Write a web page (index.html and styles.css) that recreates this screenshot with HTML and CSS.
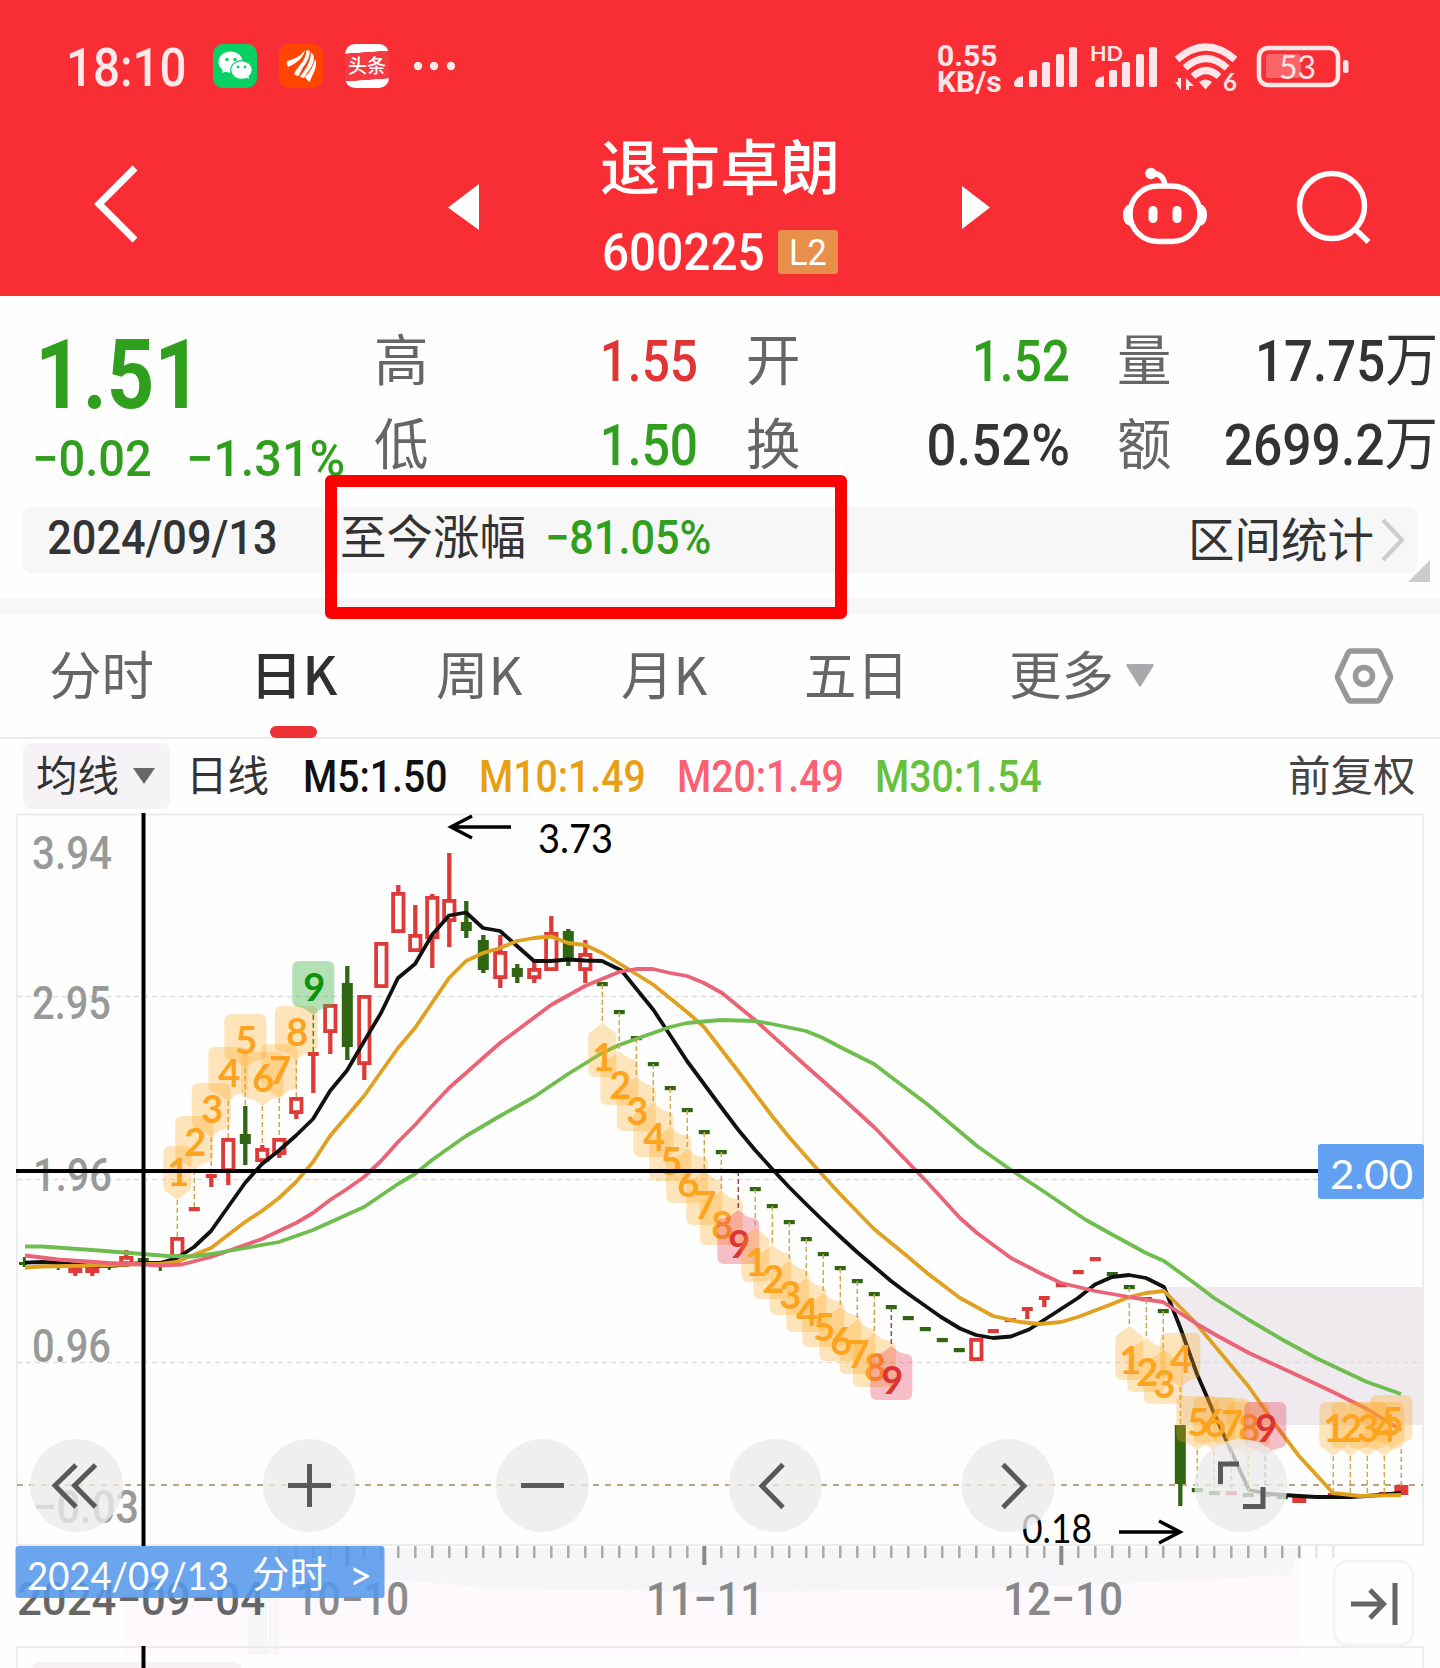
FILE: index.html
```html
<!DOCTYPE html>
<html lang="zh-CN">
<head>
<meta charset="utf-8">
<title>退市卓朗 600225</title>
<link rel="stylesheet" href="styles.css">
</head>
<body>
<header class="top">
  <div class="status">
    <span class="clock"><b class="din">18:10</b></span>
    <svg class="app" viewBox="0 0 44 44"><rect width="44" height="44" rx="10" fill="#07d163"/><ellipse cx="17.500" cy="18" rx="12" ry="10.500" fill="#fff"/><path d="M10 25l-1 4 5-2z" fill="#fff"/><ellipse cx="28.500" cy="26" rx="10.800" ry="9.400" fill="#fff" stroke="#07d163" stroke-width="1.200"/><path d="M32 33l4 2-1-4z" fill="#fff"/><g fill="#07d163"><circle cx="14" cy="15.500" r="1.700"/><circle cx="22" cy="15.500" r="1.700"/><circle cx="25" cy="23" r="1.400"/><circle cx="32" cy="23" r="1.400"/></g></svg>
    <svg class="app" viewBox="0 0 44 44"><rect width="44" height="44" rx="10" fill="#ff4500"/><g fill="#fff"><path d="M8 17C16 15 22 12 26 6C25 13 18 19 9 23Q7 20 8 17Z"/><path d="M15 30C20 20 27 17 27.500 6L31 7C30 19 23 22 20 32Q17 32 15 30Z"/><path d="M21 33C27 24 31 20 32 8L35 12C35 23 29 26 25 34Z"/><path d="M26 33C31 28 34 23 36 15Q38.500 20 35 28L30.500 38Q28 36 26 33Z"/></g></svg>
    <span class="app toutiao"><i>头条</i></span>
    <svg class="dots" viewBox="0 0 42 10"><circle cx="5" cy="5" r="4.200"/><circle cx="21" cy="5" r="4.200"/><circle cx="38" cy="5" r="4.200"/></svg>
    <span class="speed">0.55<br>KB/s</span>
    <svg class="signals" viewBox="1010 40 345 56">
      <g fill="#ffe6e8">
        <path d="M1014 84q0-6 9-8v11h-6q-3 0-3-3z"/><rect x="1029" y="70" width="8" height="17" rx="2"/><rect x="1042" y="62" width="8" height="25" rx="2"/><rect x="1056" y="54" width="8" height="33" rx="2"/><rect x="1069" y="47" width="8" height="40" rx="2"/>
        <path d="M1095 84q0-6 9-8v11h-6q-3 0-3-3z"/><rect x="1109" y="70" width="8" height="17" rx="2"/><rect x="1122" y="62" width="8" height="25" rx="2"/><rect x="1136" y="54" width="8" height="33" rx="2"/><rect x="1149" y="47" width="8" height="40" rx="2"/>
        <path d="M1199 82q6.500-5 13 0l-6.500 7.500zM1175 82h3v-4h3v12zM1186 78l8 8h-5v4h-3z"/>
        <rect x="1343" y="60" width="5.500" height="13" rx="2.500"/>
        <rect x="1266" y="54" width="35" height="24" rx="3" opacity=".3"/>
      </g>
      <g fill="none" stroke="#ffe6e8" stroke-width="7"><path d="M1177 59.500q29-25 58 0"/><path d="M1185 68q21-19 42 0"/><path d="M1193 76.500q13-12 26 0"/></g>
      <rect x="1259" y="48" width="79" height="37" rx="9" fill="none" stroke="#ffe6e8" stroke-width="4.500"/>
      <text class="st b" x="1090" y="61" font-size="21" textLength="33" lengthAdjust="spacingAndGlyphs">HD</text>
      <text class="st b" x="1223" y="91" font-size="24">6</text>
      <text class="st" x="1279" y="78.500" font-size="33" textLength="37" lengthAdjust="spacingAndGlyphs">53</text>
    </svg>
  </div>
  <nav class="nav">
    <svg width="50" height="164" viewBox="94 132 50 164"><path d="M135 168L99 204L135 240" fill="none" stroke="#fff" stroke-width="7"/></svg>
    <svg width="40" height="164" viewBox="448 132 40 164"><path d="M448 207.500L479 184V230Z" fill="#fff"/></svg>
    <div class="name">
      <h1>退市卓朗</h1>
      <div class="code"><b class="din">600225</b><span class="l2"><i>L2</i></span></div>
    </div>
    <svg width="40" height="164" viewBox="962 132 40 164"><path d="M990 207.500L962 186V229Z" fill="#fff"/></svg>
    <svg width="90" height="164" viewBox="1120 132 90 164"><g fill="none" stroke="#fff" stroke-width="5.500"><rect x="1130" y="186" width="70" height="55.500" rx="28"/><path d="M1151 173Q1164 173 1165 186"/></g><g fill="#fff"><circle cx="1151" cy="173.500" r="5.800"/><rect x="1148.500" y="206" width="9" height="17" rx="4.500"/><rect x="1172.500" y="206" width="9" height="17" rx="4.500"/><path d="M1131 204q-8 1-8 11t8 11zM1199 204q8 1 8 11t-8 11z"/></g></svg>
    <svg width="80" height="164" viewBox="1294 132 80 164"><g fill="none" stroke="#fff" stroke-width="5.500"><circle cx="1332" cy="206" r="32.500"/><path d="M1355 229L1368.500 242"/></g></svg>
  </nav>
</header>

<section class="quote">
  <div class="last">
    <div class="price"><b class="din">1.51</b></div>
    <div class="change"><b class="din">−0.02</b><b class="din">−1.31%</b></div>
  </div>
  <div class="stats">
    <span>高</span><b class="din up">1.55</b><span>开</span><b class="din down">1.52</b><span>量</span><b class="din w1">17.75<i>万</i></b>
    <span>低</span><b class="din down">1.50</b><span>换</span><b class="din w0">0.52%</b><span>额</span><b class="din w2">2699.2<i>万</i></b>
  </div>
</section>
<section class="range">
  <b class="din date">2024/09/13</b><span class="zh">至今涨幅</span><b class="din pct">−81.05%</b><span class="zh stat">区间统计</span>
  <svg width="26" height="44" viewBox="0 0 26 44"><path d="M3 2L22 22L3 42" fill="none" stroke="#ccc" stroke-width="4"/></svg>
  <i class="corner"></i>
</section>
<div class="mark"></div>
<div class="divider"></div>

<nav class="tabs">
  <span>分时</span><span class="on">日K</span><span>周K</span><span>月K</span><span>五日</span><span>更多<svg width="28" height="23" viewBox="0 0 28 23"><path d="M1 0H27Q28 0 27.500 2L15 22Q14 23 13 22L.5 2Q0 0 1 0Z" fill="#a9a8aa"/></svg></span>
  <svg width="60" height="58" viewBox="0 0 60 58"><g fill="none" stroke="#98979a" stroke-width="5.500" stroke-linejoin="round"><path d="M17 3H43Q45 3 46 5L56 27Q57 29 56 31L46 51Q45 53 43 53H17Q15 53 14 51L4 31Q3 29 4 27L14 5Q15 3 17 3Z"/><circle cx="30" cy="28" r="8.500"/></g></svg>
</nav>
<div class="ma">
  <span class="chip">均线<svg width="22" height="16" viewBox="0 0 22 16"><path d="M0 0H22L11 16Z" fill="#666"/></svg></span>
  <span class="day">日线</span>
  <b class="din m5">M5:1.50</b><b class="din m10">M10:1.49</b><b class="din m20">M20:1.49</b><b class="din m30">M30:1.54</b>
  <span class="adj">前复权</span>
</div>
<svg id="chart" class="chart" width="1440" height="855" viewBox="0 813 1440 855"></svg>
<script src="chart.js"></script>
</body>
</html>
```
FILE: styles.css
```css
* { box-sizing: border-box; }
body { margin: 0; width: 1440px; height: 1668px; overflow: hidden; position: relative; background: #fefefe; font-family: "Noto Sans CJK SC", sans-serif; color: #333; }
svg { display: block; flex: none; }
i { font-style: normal; }
.din { font-family: Roboto, "Noto Sans CJK SC", sans-serif; font-weight: 500; display: block; flex: none; white-space: nowrap; transform-origin: 0 50%; }

.top { background: #f92e34; height: 296px; color: #fff; }
.status { height: 132px; display: flex; align-items: center; padding-left: 66px; }
.clock { width: 147px; font-size: 54px; color: #ffe8ea; padding-top: 2px; }
.clock .din { font-weight: 500; transform: scaleX(.88); }
.app { width: 44px; height: 44px; margin-right: 22px; }
.toutiao { border-radius: 10px; background: linear-gradient(176deg, #fff 20%, #f53b41 21%, #f53b41 79%, #fff 80%); text-align: center; font-size: 19px; line-height: 42px; font-weight: 500; }
.dots { width: 42px; height: 10px; fill: #ffe8ea; margin-left: 2px; }
.speed { margin-left: 482px; width: 73px; font: 700 30px/26px Roboto, sans-serif; color: #ffe6e8; margin-top: 5px; }
.signals { width: 345px; height: 56px; margin-top: 4px; }
.st { font-family: Lato, sans-serif; fill: #ffe6e8; }
.st.b { font-weight: 700; }

.nav { height: 164px; display: grid; grid-template-columns: 354px 142px 372px 158px 174px 80px; padding-left: 94px; }
.name { width: 260px; }
.name h1 { margin: 0; padding-top: 2px; font-size: 60px; line-height: 60px; font-weight: 500; text-align: center; height: 90px; }
.code { display: flex; margin-left: 12px; height: 60px; align-items: center; }
.code .din { font-size: 51px; width: 176px; transform: scaleX(.935); }
.l2 { background: #e78f4b; border-radius: 4px; width: 60px; height: 44px; text-align: center; font: 37px/45px Roboto, sans-serif; }
.l2 i { display: block; transform: scaleX(.93); }

.quote { height: 211px; padding-top: 22px; display: flex; color: #333; }
.last { width: 375px; color: #309f1d; }
.price { height: 114px; line-height: 115px; font-size: 96px; padding-left: 35px; }
.price .din { transform: scaleX(.865); font-weight: 700; }
.change { height: 52px; line-height: 54px; font-size: 50px; display: flex; padding-left: 32px; white-space: nowrap; }
.change .din { width: 154px; transform: scaleX(.94); }
.change .din + .din { transform: scaleX(.97); }
.stats { display: grid; grid-template-columns: 54px 318px 54px 317px 54px 265px; grid-template-rows: 84px 84px; margin-right: 3px; }
.stats span { font-size: 54.5px; line-height: 78px; color: #666; margin-left: -1px; }
.stats .din { font-size: 57px; line-height: 87px; height: 84px; text-align: right; transform-origin: 100% 50%; transform: scaleX(.87); width: 269px; }
.stats .din:nth-child(6n) { width: 266px; }
.stats .din i { font-weight: 400; font-family: "Noto Sans CJK SC"; line-height: 1; font-size: 59px; }
.stats .w0 { transform: scaleX(.925); }
.stats .w1 { transform: scaleX(.895); }
.stats .w2 { transform: scaleX(.905); }
.up { color: #e13434; }
.down { color: #309f1d; }

.range { margin: 0 23px; height: 66px; border-radius: 8px; background: #f7f7f7; display: flex; align-items: center; position: relative; }
.range .din { font-size: 48px; line-height: 60px; padding-bottom: 4px; }
.date { width: 317px; padding-left: 27px; transform: scaleX(.9); }
.range .zh { font-size: 46.5px; line-height: 56px; padding-bottom: 13px; width: 205px; flex: none; }
.range .pct { color: #309f1d; transform: scaleX(.9); width: 643px; }
.range .zh.stat { width: 192px; padding-bottom: 6px; }
.corner { position: absolute; left: 1385px; top: 53px; border-left: 22px solid transparent; border-bottom: 22px solid #ccc; }
.mark { position: absolute; left: 325px; top: 475px; width: 522px; height: 144px; border: 12px solid #f00; border-radius: 6px; }
.divider { margin-top: 25px; height: 16px; background: #f7f7f7; }

.tabs { height: 125px; border-bottom: 2px solid #ebebeb; display: grid; grid-template-columns: 201px 186px 185px 183px 205px 325px 60px; padding-left: 49px; font-size: 52.5px; color: #666; }
.tabs span { line-height: 117px; white-space: nowrap; display: flex; position: relative; }
.tabs .on { color: #303030; font-weight: 500; }
.tabs .on::after { content: ""; position: absolute; left: 20px; top: 112px; width: 47px; height: 12px; border-radius: 6px; background: #ec3033; }
.tabs span svg { margin: 50px 0 0 12px; }
.tabs > svg { margin-top: 34px; }

.ma { height: 74px; display: flex; align-items: center; padding-left: 23px; white-space: nowrap; font-size: 41.5px; }
.chip { width: 147px; height: 66px; line-height: 60px; border-radius: 8px; background: #f6f3f7; display: flex; padding-left: 13px; margin-right: 16px; }
.chip svg { margin: 25px 0 0 14px; }
.day { width: 117px; line-height: 66px; margin-top: -6px; }
.ma .din { font-size: 44px; transform: scaleX(.89); padding-top: 2px; }
.m5 { width: 176px; color: #111; }
.m10 { width: 198px; color: #e8a012; }
.m20 { width: 198px; color: #fb6073; }
.m30 { width: 413px; color: #66c23a; }
.adj { color: #444; font-size: 42.5px; line-height: 66px; margin-top: -6px; }

.chart text { white-space: pre; }
.axis { font-family: Roboto, sans-serif; fill: #999; font-size: 46px; font-weight: 500; }
.plain { font-family: Lato, "Noto Sans CJK SC", sans-serif; }
.tag { font-family: Lato, sans-serif; font-size: 38px; font-weight: 700; text-anchor: middle; }
```
FILE: chart.js
```js
const out = [];
const add = (s) => out.push(s);
const X = (i) => 24.3 + 17 * i;
const RED = '#de3a38', GREEN = '#306512';
const label = (cls, x, base, w, t, extra = '') =>
  add(`<text class="${cls}" x="${x}" y="${base}" textLength="${w}" lengthAdjust="spacingAndGlyphs" ${extra}>${t}</text>`);

// shading behind the time axis
add('<path d="M124 1548H1300V1655H124Z" fill="#fdf9fd"/><path d="M280 1548H1300L1290 1575Q1000 1592 700 1591Q500 1590 470 1586L280 1570Z" fill="#f6f5f7"/>');
add('<path d="M248 1598h19v57h-19zM269 1598h2v57h-2zM273 1598h6v57h-6z" fill="#f6f6f6"/>');

// frame, grid, shaded area
add('<path d="M1165 1287H1424V1425H1181V1330Z" fill="#eeeaee"/>');
add('<path d="M17 1546V814.500H1423V1545H17M17 1668V1647H1423V1668" fill="none" stroke="#ececee" stroke-width="2"/>');
add('<rect x="32" y="1662" width="210" height="30" rx="8" fill="#f5f1f5"/>');
add('<path d="M17 996.500H1423M17 1179.500H1423M17 1362.500H1423" stroke="#dedee0" stroke-width="1.500" stroke-dasharray="5 4"/>');
add('<path d="M17 1485H1423" stroke="#bfa47c" stroke-width="2" stroke-dasharray="6 6"/>');

// price scale
label('axis', 32, 869, 80, '3.94');
label('axis', 32, 1019, 79, '2.95');
label('axis', 33, 1191, 79, '1.96');
label('axis', 32, 1362, 79, '0.96');
label('axis', 33, 1523, 106, '−0.03');

// candles: index, kind, high, low, body top, body bottom
const candles = [
  [3,'s',1264,1276,1266,1273],[4,'s',1264,1276,1266,1273],[6,'r',1250,1267,1256,1265],[9,'r',1237,1258,1237,1258],
  [11,'s',1174,1187,1174,1178],[12,'r',1138,1185,1138,1172],[13,'g',1106,1165,1134,1144],
  [14,'r',1145,1163,1148,1162],[15,'r',1138,1158,1138,1155],[16,'r',1097,1119,1097,1114],
  [17,'s',1052,1093,1052,1056],[18,'r',1004,1054,1004,1033],[19,'g',966,1060,983,1047],
  [20,'r',995,1080,995,1065],[21,'r',942,988,942,988],[22,'r',885,933,892,933],[23,'r',905,952,934,952],
  [24,'r',894,968,896,939],[25,'r',853,947,899,922],[26,'g',901,938,922,931],[27,'g',935,973,940,970],
  [28,'r',935,988,951,979],[29,'g',964,983,968,977],[30,'r',962,983,968,979],[31,'r',916,971,932,971],
  [32,'g',929,966,931,958],[33,'r',940,983,953,971],[56,'r',1338,1361,1338,1361],
  [59,'s',1307,1319,1307,1311],[60,'s',1296,1307,1296,1300],[68,'g',1425,1506,1425,1484],
  [75,'s',1497,1503,1497,1503],[81,'s',1485,1495,1485,1495]
];
for (const [i, k, h, l, t, b] of candles) {
  const x = X(i), c = k === 'g' ? GREEN : RED;
  if (k === 'r') {
    add(`<path d="M${x} ${h}V${t}M${x} ${b}V${l}" stroke="${c}" stroke-width="4.300"/>`);
    add(`<rect x="${x - 5.2}" y="${t + 1.9}" width="10.400" height="${b - t - 3.8}" fill="#fff" stroke="${c}" stroke-width="3.800"/>`);
  } else {
    const w = i === 75 || i === 81 || i < 5 ? 14 : 11;
    add(`<path d="M${x} ${h}V${l}" stroke="${c}" stroke-width="4.300"/><rect x="${x - w / 2}" y="${t}" width="${w}" height="${b - t}" fill="${c}"/>`);
  }
}
add(`<path d="M${X(0)} 1257V1267M19 1263.500H27M58.300 1264V1270M109.300 1264V1270M160.300 1262V1271" stroke="${GREEN}" stroke-width="3"/>`);

// limit-price sessions drawn as a single dash
const dashes = {
  7:[1260,1],10:[1209,0],34:[984,1],35:[1012,1],36:[1038,1],37:[1064,1],38:[1088,1],39:[1110,1],40:[1132,1],41:[1152,1],
  42:[1171,1],43:[1189,1],44:[1206,1],45:[1222,1],46:[1239,1],47:[1254,1],48:[1268,1],49:[1281,1],50:[1294,1],
  51:[1307,1],52:[1318,1],53:[1329,1],54:[1340,1],55:[1350,1],57:[1331,0],58:[1320,0],61:[1285,0],62:[1272,0],
  63:[1259,0],64:[1274,1],65:[1287,1],66:[1299,1],67:[1311,1],69:[1490,1],70:[1493,1],71:[1493,0],72:[1495,1],
  73:[1495,1],74:[1497,1],77:[1495,0],80:[1494,0]
};
for (const i in dashes) {
  const [y, g] = dashes[i];
  add(`<rect x="${X(+i) - 5.5}" y="${y - 2}" width="11" height="4.200" fill="${g ? GREEN : RED}"/>`);
}

// moving averages
const line = (c, p) => add(`<polyline points="${p}" fill="none" stroke="${c}" stroke-width="3.800" stroke-linejoin="round"/>`);
line('#111', '25,1262.7 42,1262 58,1263 92,1266 115,1265.5 143,1263 160,1263 177,1258 194,1247 211,1231 228,1207 245,1183 262,1164 279,1150.5 296,1135.5 313,1119 330,1091 347,1070.5 364,1041.5 381,1013 398,978 415,964 432,935 449,915.5 466,912.5 483,928 500,931 517,946 534,961 551,961 568,959.5 585,960.5 602,961 621.5,970.5 653.5,1010 670,1035 687,1061 704,1084 721,1107 738,1129.5 755,1150 774,1171 789,1187 806,1204 823,1220.5 840,1236.5 857,1252 874,1266.5 891,1281 907,1293 924,1305 941,1317 960,1328.5 976,1335 993,1338 1011,1336.5 1029,1329.5 1044,1320 1061,1309 1078,1298 1095,1284.5 1112,1277 1129,1275 1146,1278 1164,1287 1180,1327 1197,1374 1214,1413 1231,1451 1249,1490 1270,1494 1299,1496 1316,1497 1350,1497 1367,1496 1401,1493');
line('#e0a020', '25,1267.5 42,1266.5 92,1265.5 143,1264 160,1264 177,1262 186,1258 211,1248 245,1222 262,1211 279,1198 296,1182 313,1162 330,1136 364,1096 398,1048 415,1028 449,978 466,961 483,953 500,948 517,941 534,938 551,936.5 568,943 585,945 602,953 625,967 653,984.5 687,1012 704,1027 738,1071 772,1116 789,1137 818,1170 840,1194 874,1229 907,1256 927,1273 960,1298 993,1316 1020,1322 1040,1324 1061,1322 1078,1317 1112,1304 1129,1297 1146,1293 1164,1291 1193,1320 1214,1345 1249,1387 1274,1423 1299,1456 1333,1493 1360,1496 1401,1495');
line('#ea6377', '25,1255.5 58,1259.5 109,1263 143,1264.5 160,1265.5 182,1264.5 211,1257 228,1251 262,1239 296,1223 313,1213 330,1200 347,1189 364,1177 381,1161 398,1142 415,1125 432,1106 449,1088 500,1043 551,1005 585,986 602,979 619,972 636,969 653,969 670,973 687,976 704,983 722,993 755,1020 806,1066 840,1096 875,1128 927,1182 960,1218 977,1233 1011,1258 1040,1273 1061,1283 1095,1291 1129,1297 1163,1302 1197,1324 1214,1334 1249,1353 1299,1376 1333,1392 1367,1409 1401,1430');
line('#6fbd4e', '25,1246.5 42,1246.5 92,1250 143,1254 167,1256 194,1256.5 211,1254 279,1242 313,1230 364,1207 398,1184 415,1174 432,1160 466,1136 500,1116 534,1097 568,1074 602,1053 619,1045 670,1027 687,1023 721,1020 755,1021 772,1024 806,1031 823,1038 840,1047 874,1064 895,1080 927,1104 977,1146 1011,1170 1040,1189 1086,1220 1113,1235 1146,1253 1164,1261 1197,1285 1214,1298 1249,1320 1283,1340 1316,1358 1350,1374 1367,1382 1401,1394');

// nine-turn sequence markers: index, digit, candle edge, direction (1 = above candle)
const WID = { 1: 28, 2: 38, 3: 39, 4: 40, 5: 42, 6: 42, 7: 36, 8: 43, 9: 42 };
const marks = [[9,1,1237,1],[10,2,1207,1],[11,3,1174,1],[12,4,1138,1],[13,5,1105,1],[14,6,1143,1],[15,7,1135,1],[16,8,1097,1],[17,9,1052,1]];
for (let i = 34; i <= 51; i++) marks.push([i, (i - 34) % 9 + 1, dashes[i][0], 0]);
for (let i = 65; i <= 67; i++) marks.push([i, i - 64, dashes[i][0], 0]);
marks.push([68,4,1424,1],[69,5,1487,1],[70,6,1488,1],[71,7,1489,1],[72,8,1493,1],[73,9,1493,1],
  [77,1,1493,1],[78,2,1493,1],[79,3,1493,1],[80,4,1493,1],[81,5,1486,1]);
for (const [i, n, e, up] of marks) {
  // the newest marker is pulled in from the chart's edge
  const stem = X(i), x = i === 81 ? stem - 10 : stem;
  const w = WID[n], top = up ? e - 91 : e + 47, l = x - w / 2, r = x + w / 2, bot = top + 46, q = Math.min(13, w / 2);
  const green = n === 9 && i === 17, red = n === 9 && !green;
  const fill = green ? 'rgba(70,180,75,.4)' : red ? 'rgba(230,50,75,.31)' : 'rgba(255,168,30,.3)';
  const ink = green ? '#0a930a' : red ? '#dd3432' : '#fca31f';
  add(`<path d="M${stem} ${e}V${up ? e - 39 : e + 39}" stroke="${green ? '#408a20' : red ? '#a34848' : '#cfa850'}" stroke-width="1.500" stroke-dasharray="5 3"/>`);
  const body = up
    ? `M${l + 7} ${top}H${r - 7}Q${r} ${top} ${r} ${top + 7}V${bot - 7}Q${r} ${bot} ${Math.max(r - 7, x + q - 3)} ${bot}L${x + 8} ${bot + 2}L${x} ${bot + 8}L${x - 8} ${bot + 2}L${Math.min(l + 7, x - q + 3)} ${bot}Q${l} ${bot} ${l} ${bot - 7}V${top + 7}Q${l} ${top} ${l + 7} ${top}Z`
    : `M${l + 7} ${bot}H${r - 7}Q${r} ${bot} ${r} ${bot - 7}V${top + 7}Q${r} ${top} ${Math.max(r - 7, x + q - 3)} ${top}L${x + 8} ${top - 2}L${x} ${top - 8}L${x - 8} ${top - 2}L${Math.min(l + 7, x - q + 3)} ${top}Q${l} ${top} ${l} ${top + 7}V${bot - 7}Q${l} ${bot} ${l + 7} ${bot}Z`;
  add(`<path d="${body}" fill="${fill}"/><text class="tag" x="${x + 1}" y="${top + 40}" fill="${ink}">${n}</text>`);
}

// extremes
add('<path d="M511 827H451M472 816L451 827L472 838M1119 1532H1180M1159 1521L1180 1532L1159 1543" fill="none" stroke="#000" stroke-width="3.500"/>');
label('plain', 538, 853, 75, '3.73', 'font-size="41"');
label('plain', 1022, 1543, 70, '0.18', 'font-size="41"');

// crosshair
add('<path d="M143.500 813V1546M16 1171H1320M143.500 1646V1668" stroke="#000" stroke-width="4"/>');
add('<rect x="1318" y="1144" width="106" height="55" rx="3" fill="#62a0f2"/>');
label('plain', 1330, 1189, 83, '2.00', 'font-size="41" fill="#fff"');

// time axis
for (let i = 15; i <= 77; i++) {
  const major = i === 19 || i === 40 || i === 61;
  add(`<path d="M${X(i)} 1546V${major ? 1565 : 1558}" stroke="${major ? '#888' : '#a9a9a9'}" stroke-width="${major ? 4 : 2.5}" opacity="${i > 75 ? .3 : 1}"/>`);
}
label('axis', 17, 1615, 248, '2024−09−04', 'style="fill:#666"');
label('axis', 295, 1615, 114, '10−10', 'style="fill:#8b8b8d"');
label('axis', 646, 1615, 118, '11−11', 'style="fill:#88888a"');
label('axis', 1003, 1615, 120, '12−10', 'style="fill:#88888a"');
add('<rect x="15.500" y="1546" width="369" height="52" rx="3" fill="#5699ec" fill-opacity=".88"/>');
label('plain', 27, 1590, 202, '2024/09/13', 'font-size="39.500" fill="#fff"');
label('plain', 252, 1588, 75, '分时', 'font-size="37" fill="#fff"');
add('<text class="plain" x="349" y="1590" font-size="40" fill="#fff">&gt;</text>');

// floating controls
const icons = [
  'M76 1465L55 1485.500L76 1507M95.500 1465L74.500 1485.500L95.500 1507', 'M288 1485.500H331M309.500 1464V1507',
  'M521 1485.500H564', 'M783 1464.500L762 1486L783 1507.500', 'M1003 1464.500L1024 1486L1003 1507.500',
  'M1220.500 1484V1464H1239M1263 1487V1506.500H1243'
];
icons.forEach((d, i) => add(`<circle cx="${76.5 + 232.9 * i}" cy="1485.500" r="46.500" fill="#eaeaea" fill-opacity=".78"/><path d="${d}" fill="none" stroke="#595959" stroke-width="5"/>`));
add('<rect x="1334" y="1561" width="79" height="84" rx="14" fill="#fefefe" stroke="#f6f3f6" stroke-width="3"/>');
add('<path d="M1351 1604H1383M1370 1590L1383.500 1604L1370 1618M1395 1583V1625" fill="none" stroke="#666" stroke-width="5"/>');

document.getElementById('chart').innerHTML = out.join('');
```
